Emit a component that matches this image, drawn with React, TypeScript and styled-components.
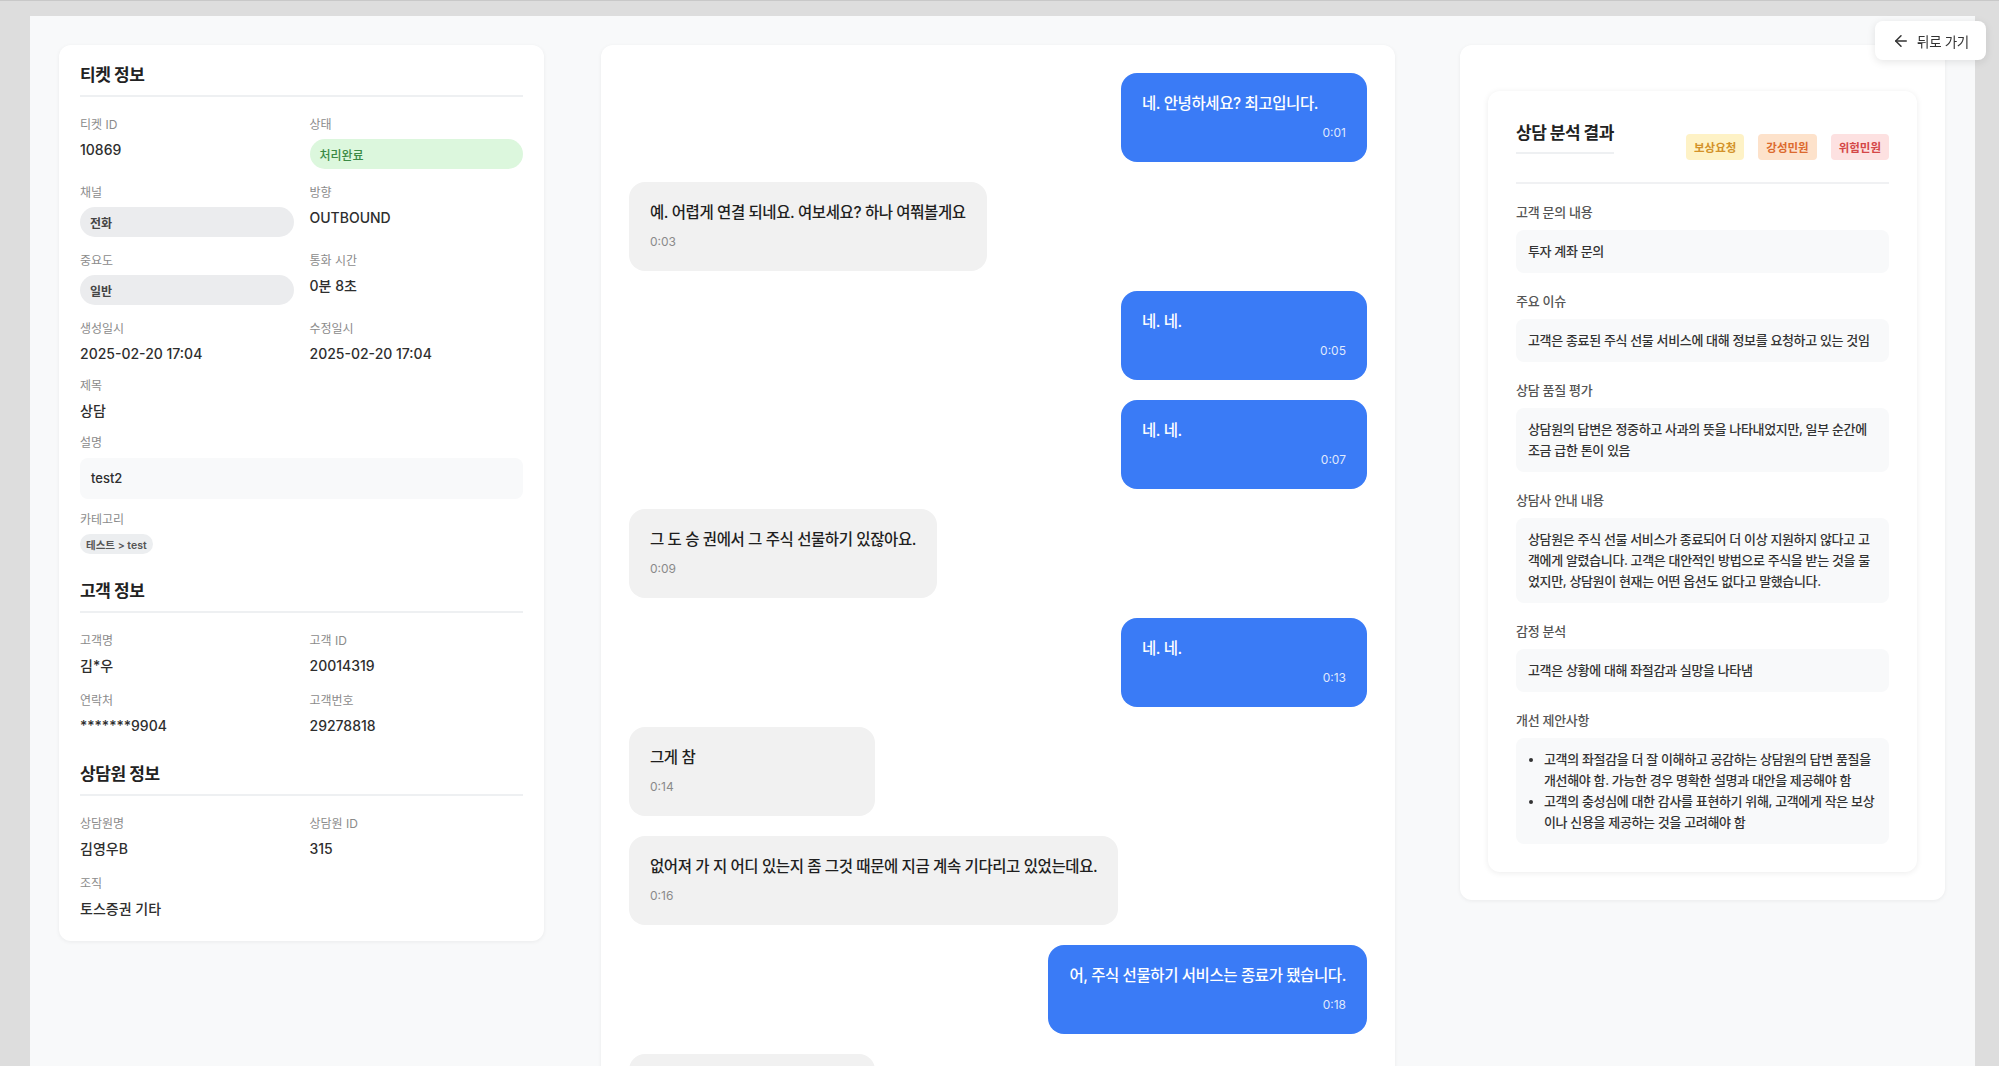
import styled, { createGlobalStyle } from 'styled-components';
import { ArrowLeft } from 'lucide-react';

const GlobalStyle = createGlobalStyle`
  * { box-sizing: border-box; }
  body {
    margin: 0;
    background: #dddddd;
    font-family: "Inter", "Noto Sans CJK KR", sans-serif;
    color: #333;
  }
`;

const Frame = styled.div`
  border-top: 1px solid #c8c8c8;
  padding: 15px 24px 0 30px;
`;

const Page = styled.main`
  background: #f8f9fa;
  padding: 29px 30px 40px 29px;
  display: flex;
  align-items: flex-start;
  gap: 57px;
  min-height: 1100px;
`;

const Card = styled.section`
  background: #ffffff;
  border-radius: 12px;
  box-shadow: 0 1px 4px rgba(0, 0, 0, 0.06);
`;

/* ---------- left: ticket info ---------- */

const InfoCard = styled(Card)`
  width: 485px;
  flex: none;
  padding: 18px 21px 21px;
`;

const InfoSection = styled.div`
  & + & {
    margin-top: 25px;
  }
`;

const SectionTitle = styled.h2`
  margin: 0 0 20px;
  padding-bottom: 8px;
  border-bottom: 2px solid #eef0f2;
  font-size: 17px;
  line-height: 24px;
  font-weight: 700;
  letter-spacing: -0.4px;
  color: #222;
`;

const FieldGrid = styled.div<{ $rowGap: number }>`
  display: grid;
  grid-template-columns: 1fr 1fr;
  column-gap: 16px;
  row-gap: ${(p) => p.$rowGap}px;
`;

const Field = styled.div<{ $full?: boolean }>`
  grid-column: ${(p) => (p.$full ? '1 / -1' : 'auto')};
  min-width: 0;
`;

const FieldLabel = styled.div`
  font-size: 12px;
  line-height: 16px;
  color: #8b8b8b;
  margin-bottom: 6px;
`;

const FieldValue = styled.div`
  font-size: 14px;
  line-height: 22px;
  font-weight: 500;
  color: #2e2e2e;
`;

const Pill = styled.div<{ $tone: 'green' | 'gray' }>`
  margin: 1px 0 3px;
  height: 30px;
  border-radius: 15px;
  padding: 0 10px;
  display: flex;
  align-items: center;
  font-size: 12px;
  font-weight: ${(p) => (p.$tone === 'green' ? 500 : 600)};
  background: ${(p) => (p.$tone === 'green' ? '#dcf7dd' : '#ebecee')};
  color: ${(p) => (p.$tone === 'green' ? '#3b8a45' : '#444')};
`;

const NoteBox = styled.div`
  margin-top: 7px;
  padding: 10px 11px;
  border-radius: 8px;
  background: #f8f9fa;
  font-size: 13px;
  line-height: 21px;
  font-weight: 500;
  color: #2e2e2e;
`;

const Chip = styled.span`
  display: flex;
  width: fit-content;
  align-items: center;
  height: 20px;
  padding: 0 6px;
  border-radius: 10px;
  background: #eceef0;
  font-size: 10.5px;
  font-weight: 600;
  color: #555;
`;

/* ---------- middle: transcript ---------- */

const ChatCard = styled(Card)`
  width: 794px;
  flex: none;
  padding: 28px;
  display: flex;
  flex-direction: column;
  gap: 20px;
`;

const Bubble = styled.div<{ $mine: boolean }>`
  align-self: ${(p) => (p.$mine ? 'flex-end' : 'flex-start')};
  min-width: 246px;
  max-width: 70%;
  padding: 20px 21px;
  border-radius: 16px;
  background: ${(p) => (p.$mine ? '#3a7bf6' : '#f1f1f1')};
  color: ${(p) => (p.$mine ? '#ffffff' : '#1f1f1f')};
`;

const BubbleText = styled.div`
  font-size: 15.5px;
  line-height: 22px;
  font-weight: 500;
  letter-spacing: -0.4px;
`;

const BubbleTime = styled.div<{ $mine: boolean }>`
  margin-top: 9px;
  font-size: 12px;
  line-height: 18px;
  text-align: ${(p) => (p.$mine ? 'right' : 'left')};
  color: ${(p) => (p.$mine ? 'rgba(255, 255, 255, 0.85)' : '#8a8a8a')};
`;

/* ---------- right: analysis ---------- */

const AnalysisPanel = styled(Card)`
  width: 485px;
  flex: none;
  margin-left: 8px;
  padding: 46px 28px 28px;
`;

const AnalysisCard = styled.div`
  background: #ffffff;
  border-radius: 12px;
  box-shadow: 0 1px 6px rgba(0, 0, 0, 0.08);
  padding: 30px 28px 28px;
`;

const AnalysisHeader = styled.div`
  display: flex;
  justify-content: space-between;
  align-items: flex-end;
  padding-bottom: 22px;
  border-bottom: 2px solid #f0f1f3;
`;

const AnalysisTitle = styled.h2`
  margin: 0 0 6px;
  padding-bottom: 7px;
  border-bottom: 2px solid #eef0f2;
  font-size: 17px;
  line-height: 24px;
  font-weight: 700;
  letter-spacing: -0.5px;
  color: #222;
`;

const BadgeRow = styled.div`
  display: flex;
  gap: 14px;
`;

const badgeTones = {
  amber: { bg: '#fef2c6', fg: '#d3922a' },
  orange: { bg: '#fde2cb', fg: '#dc6a2e' },
  red: { bg: '#fde1e1', fg: '#d44747' },
};

const Badge = styled.span<{ $tone: keyof typeof badgeTones }>`
  display: inline-flex;
  align-items: center;
  height: 26px;
  padding: 0 8px;
  border-radius: 4px;
  font-size: 11.5px;
  font-weight: 600;
  background: ${(p) => badgeTones[p.$tone].bg};
  color: ${(p) => badgeTones[p.$tone].fg};
`;

const AnalysisSection = styled.div`
  margin-top: 19px;
`;

const AnalysisLabel = styled.div`
  font-size: 13px;
  line-height: 18px;
  font-weight: 500;
  letter-spacing: -0.3px;
  color: #555;
  margin-bottom: 9px;
`;

const AnalysisBox = styled.div`
  padding: 11px 12px;
  border-radius: 8px;
  background: #f8f9fa;
  font-size: 13px;
  line-height: 21px;
  font-weight: 500;
  letter-spacing: -0.35px;
  color: #333;
  white-space: pre-line;

  ul {
    margin: 0;
    padding-left: 16px;
  }
`;

const BackButton = styled.button`
  position: fixed;
  top: 21px;
  right: 13px;
  height: 39px;
  padding: 0 17px;
  display: flex;
  align-items: center;
  gap: 7px;
  border: none;
  border-radius: 8px;
  background: #ffffff;
  box-shadow: 0 2px 8px rgba(0, 0, 0, 0.1);
  font-family: inherit;
  font-size: 13.5px;
  letter-spacing: -0.3px;
  color: #333;
  cursor: pointer;
`;

const messages = [
  { mine: true, text: '네. 안녕하세요? 최고입니다.', time: '0:01' },
  { mine: false, text: '예. 어렵게 연결 되네요. 여보세요? 하나 여쭤볼게요', time: '0:03' },
  { mine: true, text: '네. 네.', time: '0:05' },
  { mine: true, text: '네. 네.', time: '0:07' },
  { mine: false, text: '그 도 승 권에서 그 주식 선물하기 있잖아요.', time: '0:09' },
  { mine: true, text: '네. 네.', time: '0:13' },
  { mine: false, text: '그게 참', time: '0:14' },
  { mine: false, text: '없어져 가 지 어디 있는지 좀 그것 때문에 지금 계속 기다리고 있었는데요.', time: '0:16' },
  { mine: true, text: '어, 주식 선물하기 서비스는 종료가 됐습니다.', time: '0:18' },
  { mine: false, text: '네.', time: '0:20' },
];

const analysis = [
  { label: '고객 문의 내용', body: '투자 계좌 문의' },
  { label: '주요 이슈', body: '고객은 종료된 주식 선물 서비스에 대해 정보를 요청하고 있는 것임' },
  {
    label: '상담 품질 평가',
    body: '상담원의 답변은 정중하고 사과의 뜻을 나타내었지만, 일부 순간에\n조금 급한 톤이 있음',
  },
  {
    label: '상담사 안내 내용',
    body: '상담원은 주식 선물 서비스가 종료되어 더 이상 지원하지 않다고 고\n객에게 알렸습니다. 고객은 대안적인 방법으로 주식을 받는 것을 물\n었지만, 상담원이 현재는 어떤 옵션도 없다고 말했습니다.',
  },
  { label: '감정 분석', body: '고객은 상황에 대해 좌절감과 실망을 나타냄' },
];

const suggestions = [
  '고객의 좌절감을 더 잘 이해하고 공감하는 상담원의 답변 품질을\n개선해야 함. 가능한 경우 명확한 설명과 대안을 제공해야 함',
  '고객의 충성심에 대한 감사를 표현하기 위해, 고객에게 작은 보상\n이나 신용을 제공하는 것을 고려해야 함',
];

export default function App() {
  return (
    <>
      <GlobalStyle />
      <Frame>
        <Page>
          <InfoCard>
            <InfoSection>
              <SectionTitle>티켓 정보</SectionTitle>
              <FieldGrid $rowGap={13}>
                <Field>
                  <FieldLabel>티켓 ID</FieldLabel>
                  <FieldValue>10869</FieldValue>
                </Field>
                <Field>
                  <FieldLabel>상태</FieldLabel>
                  <Pill $tone="green">처리완료</Pill>
                </Field>
                <Field>
                  <FieldLabel>채널</FieldLabel>
                  <Pill $tone="gray">전화</Pill>
                </Field>
                <Field>
                  <FieldLabel>방향</FieldLabel>
                  <FieldValue>OUTBOUND</FieldValue>
                </Field>
                <Field>
                  <FieldLabel>중요도</FieldLabel>
                  <Pill $tone="gray">일반</Pill>
                </Field>
                <Field>
                  <FieldLabel>통화 시간</FieldLabel>
                  <FieldValue>0분 8초</FieldValue>
                </Field>
                <Field>
                  <FieldLabel>생성일시</FieldLabel>
                  <FieldValue>2025-02-20 17:04</FieldValue>
                </Field>
                <Field>
                  <FieldLabel>수정일시</FieldLabel>
                  <FieldValue>2025-02-20 17:04</FieldValue>
                </Field>
                <Field $full>
                  <FieldLabel>제목</FieldLabel>
                  <FieldValue>상담</FieldValue>
                </Field>
                <Field $full>
                  <FieldLabel>설명</FieldLabel>
                  <NoteBox>test2</NoteBox>
                </Field>
                <Field $full>
                  <FieldLabel>카테고리</FieldLabel>
                  <Chip>테스트 &gt; test</Chip>
                </Field>
              </FieldGrid>
            </InfoSection>

            <InfoSection>
              <SectionTitle>고객 정보</SectionTitle>
              <FieldGrid $rowGap={16}>
                <Field>
                  <FieldLabel>고객명</FieldLabel>
                  <FieldValue>김*우</FieldValue>
                </Field>
                <Field>
                  <FieldLabel>고객 ID</FieldLabel>
                  <FieldValue>20014319</FieldValue>
                </Field>
                <Field>
                  <FieldLabel>연락처</FieldLabel>
                  <FieldValue>*******9904</FieldValue>
                </Field>
                <Field>
                  <FieldLabel>고객번호</FieldLabel>
                  <FieldValue>29278818</FieldValue>
                </Field>
              </FieldGrid>
            </InfoSection>

            <InfoSection>
              <SectionTitle>상담원 정보</SectionTitle>
              <FieldGrid $rowGap={16}>
                <Field>
                  <FieldLabel>상담원명</FieldLabel>
                  <FieldValue>김영우B</FieldValue>
                </Field>
                <Field>
                  <FieldLabel>상담원 ID</FieldLabel>
                  <FieldValue>315</FieldValue>
                </Field>
                <Field $full>
                  <FieldLabel>조직</FieldLabel>
                  <FieldValue>토스증권 기타</FieldValue>
                </Field>
              </FieldGrid>
            </InfoSection>
          </InfoCard>

          <ChatCard>
            {messages.map((m, i) => (
              <Bubble key={i} $mine={m.mine}>
                <BubbleText>{m.text}</BubbleText>
                <BubbleTime $mine={m.mine}>{m.time}</BubbleTime>
              </Bubble>
            ))}
          </ChatCard>

          <AnalysisPanel>
            <AnalysisCard>
              <AnalysisHeader>
                <AnalysisTitle>상담 분석 결과</AnalysisTitle>
                <BadgeRow>
                  <Badge $tone="amber">보상요청</Badge>
                  <Badge $tone="orange">강성민원</Badge>
                  <Badge $tone="red">위험민원</Badge>
                </BadgeRow>
              </AnalysisHeader>
              {analysis.map((a) => (
                <AnalysisSection key={a.label}>
                  <AnalysisLabel>{a.label}</AnalysisLabel>
                  <AnalysisBox>{a.body}</AnalysisBox>
                </AnalysisSection>
              ))}
              <AnalysisSection>
                <AnalysisLabel>개선 제안사항</AnalysisLabel>
                <AnalysisBox>
                  <ul>
                    {suggestions.map((s) => (
                      <li key={s}>{s}</li>
                    ))}
                  </ul>
                </AnalysisBox>
              </AnalysisSection>
            </AnalysisCard>
          </AnalysisPanel>
        </Page>
      </Frame>
      <BackButton type="button">
        <ArrowLeft size={18} strokeWidth={2} />
        뒤로 가기
      </BackButton>
    </>
  );
}
